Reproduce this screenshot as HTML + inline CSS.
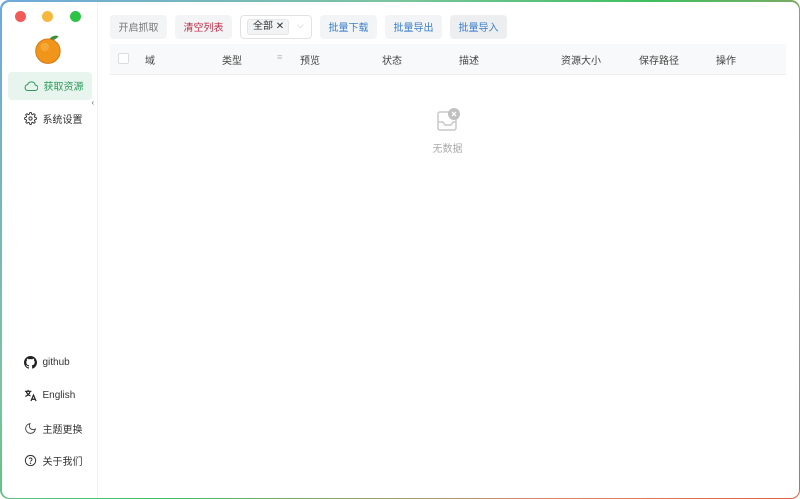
<!DOCTYPE html>
<html><head><meta charset="utf-8"><style>
*{box-sizing:border-box;margin:0;padding:0}
body{width:800px;height:499px;overflow:hidden;background:#fff;font-family:"Liberation Sans","Noto Sans CJK SC",sans-serif;font-size:10px;color:#333;position:relative}
.frame{position:absolute;inset:0;border-radius:9px;padding:1.5px;background:linear-gradient(135deg,#6fa8dc 0%,#7cc4a0 30%,#3fbf5f 50%,#d98a6a 80%,#e06040 100%)}
.win{position:absolute;inset:1.5px;border-radius:8px;background:#fff;overflow:hidden}
.side{position:absolute;left:0;top:0;width:96px;height:100%;border-right:1px solid #f0f0f0;background:#fff}
.dot{position:absolute;top:9px;width:11px;height:11px;border-radius:50%}
.it{position:absolute;left:6px;width:84px;height:28px;display:flex;align-items:center;padding-left:16px;gap:6px;color:#333;font-size:10px;white-space:nowrap}
.btn{position:absolute;top:13px;height:24px;border-radius:4px;background:#f3f4f5;display:flex;align-items:center;justify-content:center;font-size:10px}
.th{position:absolute;top:50px;font-size:10px;color:#444}
</style></head><body>
<div class="frame"></div>
<div class="win">
<div class="side">
<div class="dot" style="left:13px;background:#f25a57"></div>
<div class="dot" style="left:40px;background:#f6b73c"></div>
<div class="dot" style="left:68px;background:#2dc445"></div>
<svg style="position:absolute;left:32px;top:31px" width="30" height="32" viewBox="0 0 28 30"><path d="M14 6 Q18 1 23 3 Q20 7 15 7Z" fill="#3a8f3a"/><circle cx="13" cy="17" r="11.5" fill="#f0951a"/><circle cx="10" cy="13" r="4" fill="#f7b84a" opacity=".6"/><circle cx="13" cy="17" r="11.5" fill="none" stroke="#d07010" stroke-width=".8"/></svg>
<div class="it" style="top:70px;background:#e8f5ee;border-radius:4px;color:#2a9a5a"><svg width="14" height="12" viewBox="0 0 14 12"><path d="M3.5 10.5h7.5a2.7 2.7 0 0 0 .3-5.4A4 4 0 0 0 3.6 4.6 3 3 0 0 0 3.5 10.5z" fill="none" stroke="#2a9a5a" stroke-width="1"/></svg>获取资源</div>
<div class="it" style="top:103px"><svg width="13" height="13" viewBox="0 0 24 24" fill="none" stroke="#333" stroke-width="1.8"><circle cx="12" cy="12" r="3"/><path d="M19.4 15a1.7 1.7 0 0 0 .3 1.8l.1.1a2 2 0 1 1-2.8 2.8l-.1-.1a1.7 1.7 0 0 0-1.8-.3 1.7 1.7 0 0 0-1 1.5V21a2 2 0 1 1-4 0v-.1a1.7 1.7 0 0 0-1.1-1.5 1.7 1.7 0 0 0-1.8.3l-.1.1a2 2 0 1 1-2.8-2.8l.1-.1a1.7 1.7 0 0 0 .3-1.8 1.7 1.7 0 0 0-1.5-1H3a2 2 0 1 1 0-4h.1a1.7 1.7 0 0 0 1.5-1.1 1.7 1.7 0 0 0-.3-1.8l-.1-.1a2 2 0 1 1 2.8-2.8l.1.1a1.7 1.7 0 0 0 1.8.3H9a1.7 1.7 0 0 0 1-1.5V3a2 2 0 1 1 4 0v.1a1.7 1.7 0 0 0 1 1.5 1.7 1.7 0 0 0 1.8-.3l.1-.1a2 2 0 1 1 2.8 2.8l-.1.1a1.7 1.7 0 0 0-.3 1.8V9a1.7 1.7 0 0 0 1.5 1H21a2 2 0 1 1 0 4h-.1a1.7 1.7 0 0 0-1.5 1z"/></svg>系统设置</div>
<div style="position:absolute;left:90px;top:96px;font-size:8px;color:#666">‹</div>
<div class="it" style="top:347px"><svg width="13" height="13" viewBox="0 0 16 16"><path fill="#222" d="M8 0C3.6 0 0 3.6 0 8c0 3.5 2.3 6.5 5.5 7.6.4.1.5-.2.5-.4v-1.4c-2.2.5-2.7-1-2.7-1-.4-.9-.9-1.2-.9-1.2-.7-.5.1-.5.1-.5.8.1 1.2.8 1.2.8.7 1.2 1.9.9 2.300.7.1-.5.3-.9.5-1.1-1.8-.2-3.600-.9-3.600-4 0-.9.3-1.6.8-2.1-.1-.2-.4-1 .1-2.1 0 0 .7-.2 2.2.8.6-.2 1.3-.3 2-.3s1.4.1 2 .3c1.5-1 2.2-.8 2.2-.8.4 1.1.2 1.9.1 2.1.5.6.8 1.3.8 2.1 0 3.1-1.9 3.7-3.6 3.9.3.3.5.8.5 1.5v2.2c0 .2.1.5.6.4C13.7 14.5 16 11.5 16 8c0-4.4-3.6-8-8-8z"/></svg>github</div>
<div class="it" style="top:380px"><svg width="13" height="13" viewBox="0 0 14 14" fill="none" stroke="#222" stroke-width="1.3"><path d="M1 2.5h7M4.5 1v1.5M2.5 2.5c.5 2.5 2 4 4.5 5M6.5 2.5c-.5 2.5-2.5 4.5-5 5.5"/><path d="M7.5 13l2.7-6.5L13 13M8.5 11h3.5"/></svg>English</div>
<div class="it" style="top:413px"><svg width="13" height="13" viewBox="0 0 24 24" fill="none" stroke="#333" stroke-width="1.6"><path d="M21 12.8A9 9 0 1 1 11.2 3a7 7 0 0 0 9.8 9.8z"/></svg>主题更换</div>
<div class="it" style="top:445px"><svg width="13" height="13" viewBox="0 0 24 24" fill="none" stroke="#333" stroke-width="1.8"><circle cx="12" cy="12" r="9.5"/><path d="M9.2 9.2a2.9 2.9 0 0 1 5.6 1c0 1.9-2.8 2.6-2.8 3.8"/><circle cx="12" cy="17" r=".5" fill="#333"/></svg>关于我们</div>
</div>
<div class="btn" style="left:108.5px;width:57px;color:#777">开启抓取</div>
<div class="btn" style="left:173.5px;width:57px;color:#c0304a">清空列表</div>
<div style="position:absolute;left:238.5px;top:13px;width:72px;height:24px;border:1px solid #e2e2e2;border-radius:4px"><div style="position:absolute;left:6px;top:3px;height:16px;width:42px;background:#f2f3f4;border:1px solid #e6e6e6;border-radius:3px;font-size:10px;line-height:14px;padding-left:5px">全部 ✕</div><span style="position:absolute;left:56px;top:4px;color:#bbb;font-size:9px">⌵</span></div>
<div class="btn" style="left:318.5px;width:57px;color:#3a7ed0">批量下载</div>
<div class="btn" style="left:383.5px;width:57px;color:#3a7ed0">批量导出</div>
<div class="btn" style="left:448.5px;width:57px;color:#3a7ed0;background:#eceef0">批量导入</div>
<div style="position:absolute;left:108.5px;top:42px;width:676px;height:31px;background:#f8f9fa;border-bottom:1px solid #eee"></div>
<div style="position:absolute;left:116.5px;top:51px;width:11px;height:11px;border:1px solid #ddd;border-radius:2px;background:#fff"></div>
<div class="th" style="left:143.5px">域</div>
<div class="th" style="left:220.5px">类型</div>
<div class="th" style="left:275.5px;color:#bbb;font-size:9px">≡</div>
<div class="th" style="left:298.5px">预览</div>
<div class="th" style="left:380.5px">状态</div>
<div class="th" style="left:457.5px">描述</div>
<div class="th" style="left:559.5px">资源大小</div>
<div class="th" style="left:637.5px">保存路径</div>
<div class="th" style="left:714.5px">操作</div>
<svg style="position:absolute;left:434px;top:105px" width="26" height="26" viewBox="0 0 26 26"><rect x="2" y="5" width="18" height="18" rx="2" fill="none" stroke="#c8c8c8" stroke-width="1.5"/><path d="M2 15h5l2 3h6l2-3h3" fill="none" stroke="#c8c8c8" stroke-width="1.5"/><circle cx="18" cy="7" r="6" fill="#c0c0c0"/><path d="M16 5l4 4M20 5l-4 4" stroke="#fff" stroke-width="1.3"/></svg>
<div style="position:absolute;left:431px;top:138px;color:#aaa;font-size:10px">无数据</div>
</div>
</body></html>
